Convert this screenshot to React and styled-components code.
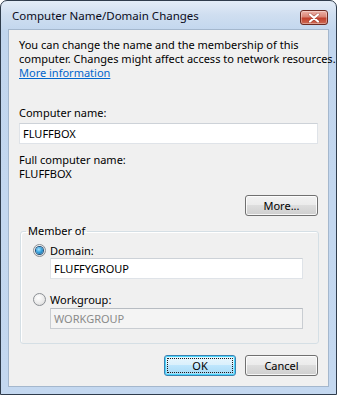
import React from "react";
import styled, { createGlobalStyle } from "styled-components";

const Global = createGlobalStyle`
  html, body { margin: 0; padding: 0; background: #ffffff; }
  body { font-family: "Noto Sans", "Open Sans", sans-serif; font-size: 11px; color: #000; }
  * { box-sizing: border-box; }
`;

const Window = styled.div`
  width: 337px;
  height: 395px;
  border: 1px solid #2f3c4c;
  border-radius: 7px 7px 0 0;
  background: linear-gradient(180deg, #e3ecf7 0px, #cfdef0 14px, #c2d6ee 30px, #c4d8f0 100%);
  display: flex;
  flex-direction: column;
  overflow: hidden;
`;

const TitleBar = styled.div`
  height: 28px;
  flex: none;
  display: flex;
  align-items: center;
  padding: 2px 8px 0 11px;
`;

const Title = styled.div`
  flex: 1;
  font-size: 11.5px;
  line-height: 14px;
  color: #0b0b1a;
  white-space: nowrap;
`;

const CloseButton = styled.div`
  width: 28px;
  height: 15px;
  margin-top: 3px;
  border: 1px solid #6b2a22;
  border-radius: 3px;
  background: linear-gradient(180deg, #eeb2a8 0%, #d98576 45%, #c2402c 55%, #cd6a55 100%);
  box-shadow: inset 0 0 0 1px rgba(255, 255, 255, 0.35);
  display: flex;
  align-items: center;
  justify-content: center;
`;

const Body = styled.div`
  flex: 1;
  margin: 0 7px 7px 7px;
  border: 1px solid #a4b7cd;
  background: #f0f0f0;
  padding: 8px 10px 0 10px;
  display: flex;
  flex-direction: column;
`;

const Text = styled.div`
  line-height: 14px;
  white-space: nowrap;
  margin-top: ${(p) => p.$mt || 0}px;
`;

const Link = styled.a`
  color: #0066cc;
  text-decoration: underline;
  cursor: pointer;
`;

const TextBox = styled.div`
  height: 21px;
  flex: none;
  margin-top: ${(p) => p.$mt || 0}px;
  margin-left: ${(p) => p.$ml || 0}px;
  width: ${(p) => p.$w}px;
  border: 1px solid ${(p) => (p.$disabled ? "#c9cdd2" : "#dfe3e8")};
  border-top-color: ${(p) => (p.$disabled ? "#b7bcc2" : "#cdd2d8")};
  background: ${(p) => (p.$disabled ? "#f4f4f4" : "#ffffff")};
  color: ${(p) => (p.$disabled ? "#8a8a8a" : "#000")};
  padding: 0 3px;
  display: flex;
  align-items: center;
  line-height: 14px;
  white-space: nowrap;
`;

const ButtonRow = styled.div`
  display: flex;
  justify-content: flex-end;
  gap: 9px;
  flex: none;
  margin-top: ${(p) => p.$mt || 0}px;
`;

const Button = styled.div`
  width: ${(p) => p.$w || 73}px;
  height: 21px;
  border: 1px solid ${(p) => (p.$default ? "#3c7fb1" : "#707070")};
  border-radius: 3px;
  background: ${(p) =>
    p.$default
      ? "linear-gradient(180deg, #eaf6fd 0%, #d9f0fc 49%, #bee6fd 50%, #a7d9f5 100%)"
      : "linear-gradient(180deg, #f2f2f2 0%, #ebebeb 49%, #dddddd 50%, #cfcfcf 100%)"};
  box-shadow: inset 0 0 0 1px ${(p) => (p.$default ? "#48d6fb" : "rgba(255,255,255,0.8)")};
  display: flex;
  align-items: center;
  justify-content: center;
  line-height: 14px;
  position: relative;
`;

const FocusRing = styled.div`
  position: absolute;
  inset: 2px;
  border: 1px dotted #1b1b1b;
  border-radius: 1px;
`;

const Group = styled.fieldset`
  margin: 8px 0 0 1px;
  width: 299px;
  flex: none;
  border: 1px solid #d5dfe5;
  border-radius: 3px;
  box-shadow: inset 1px 1px 0 #ffffff;
  padding: 5px 14px 14px 12px;
  min-width: 0;
`;

const Legend = styled.legend`
  padding: 0 2px;
  margin-left: -7px;
  line-height: 14px;
  font-size: 11px;
`;

const RadioRow = styled.div`
  display: flex;
  align-items: center;
  gap: 4px;
  height: 14px;
  margin-top: ${(p) => p.$mt || 0}px;
`;

const Radio = styled.span`
  width: 13px;
  height: 13px;
  border-radius: 50%;
  border: 1px solid #8b8f94;
  background: radial-gradient(circle at 40% 35%, #ffffff 0%, #e8e8e8 60%, #cfcfcf 100%);
  display: flex;
  align-items: center;
  justify-content: center;
  flex: none;
`;

const RadioDot = styled.span`
  width: 7px;
  height: 7px;
  border-radius: 50%;
  background: radial-gradient(circle at 40% 35%, #a8e4ff 0%, #3aa5e0 45%, #0f5d93 100%);
  box-shadow: 0 0 0 1px #1f4f7a;
`;

function CloseIcon() {
  return (
    <svg width="12" height="10" viewBox="0 0 12 10">
      <path d="M2 1.5 L10 8.5 M10 1.5 L2 8.5" stroke="#7a2a20" strokeWidth="3.2" strokeLinecap="round" opacity="0.5" />
      <path d="M2 1.5 L10 8.5 M10 1.5 L2 8.5" stroke="#ffffff" strokeWidth="2.2" strokeLinecap="round" />
    </svg>
  );
}

export default function App() {
  return (
    <>
      <Global />
      <Window>
        <TitleBar>
          <Title>Computer Name/Domain Changes</Title>
          <CloseButton>
            <CloseIcon />
          </CloseButton>
        </TitleBar>
        <Body>
          <Text>
            You can change the name and the membership of this
            <br />
            computer. Changes might affect access to network resources.
            <br />
            <Link>More information</Link>
          </Text>
          <Text $mt={26}>Computer name:</Text>
          <TextBox $mt={3} $w={299}>FLUFFBOX</TextBox>
          <Text $mt={9}>Full computer name:</Text>
          <Text>FLUFFBOX</Text>
          <ButtonRow $mt={14}>
            <Button>More...</Button>
          </ButtonRow>
          <Group>
            <Legend>Member of</Legend>
            <RadioRow>
              <Radio>
                <RadioDot />
              </Radio>
              <span>Domain:</span>
            </RadioRow>
            <TextBox $mt={1} $ml={17} $w={253}>FLUFFYGROUP</TextBox>
            <RadioRow $mt={13}>
              <Radio />
              <span>Workgroup:</span>
            </RadioRow>
            <TextBox $mt={2} $ml={17} $w={253} $disabled>WORKGROUP</TextBox>
          </Group>
          <ButtonRow $mt={11}>
            <Button $default $w={72}>
              OK
              <FocusRing />
            </Button>
            <Button>Cancel</Button>
          </ButtonRow>
        </Body>
      </Window>
    </>
  );
}
